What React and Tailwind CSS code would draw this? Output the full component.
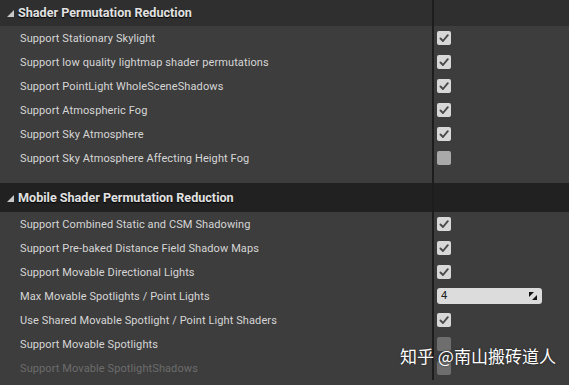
import React from "react";

const Check = () => (
  <div className="w-[14px] h-[14px] rounded-[2px] bg-[#d8d8d8] flex items-center justify-center">
    <svg width="10" height="10" viewBox="0 0 10 10">
      <path d="M1.5 5.5 L4 8 L8.8 2.2" fill="none" stroke="#4a4a4a" strokeWidth="1.9" strokeLinecap="round" strokeLinejoin="round" />
    </svg>
  </div>
);

const Box = ({ dim }) => (
  <div className={`w-[14px] h-[14px] rounded-[2px] ${dim ? "bg-[#6e6e6e]" : "bg-[#a9a9a9]"}`} />
);

const Row = ({ label, children, dim }) => (
  <div className="flex h-[24px]">
    <div className={`w-[432px] pl-[20px] pt-[2px] flex items-center text-[11px] tracking-[0.1px] ${dim ? "text-[#6c6c6c]" : "text-[#d6d6d6]"}`}>
      {label}
    </div>
    <div className="flex-1 border-l-2 border-[#1d1d1d] flex items-center pl-[3px]">{children}</div>
  </div>
);

const Header = ({ title, dark, h }) => (
  <div className={`flex ${h} ${dark ? "bg-[#212121]" : "bg-[#2f2f2f]"}`}>
    <div className={`w-[432px] flex items-center pl-[6px] gap-[3px] ${dark ? "pt-[2px]" : ""}`}>
      <svg width="9" height="9" viewBox="0 0 9 9">
        <path d="M8 1 L8 8 L1 8 Z" fill="#c8c8c8" />
      </svg>
      <span className="text-[12.6px] font-bold text-[#e2e2e2] [text-shadow:0_1px_1px_#000]">{title}</span>
    </div>
    <div className="flex-1 border-l-2 border-[#1d1d1d]" />
  </div>
);

const Spacer = ({ h }) => (
  <div className={`flex ${h}`}>
    <div className="w-[432px]" />
    <div className="flex-1 border-l-2 border-[#1d1d1d]" />
  </div>
);

export default function App() {
  return (
    <div className="relative w-[569px] h-[385px] overflow-hidden bg-[#3d3d3d] font-['Roboto',sans-serif]">
      <Header title="Shader Permutation Reduction" h="h-[26px]" />
      <Row label="Support Stationary Skylight"><Check /></Row>
      <Row label="Support low quality lightmap shader permutations"><Check /></Row>
      <Row label="Support PointLight WholeSceneShadows"><Check /></Row>
      <Row label="Support Atmospheric Fog"><Check /></Row>
      <Row label="Support Sky Atmosphere"><Check /></Row>
      <Row label="Support Sky Atmosphere Affecting Height Fog"><Box /></Row>
      <Spacer h="h-[13px]" />
      <Header title="Mobile Shader Permutation Reduction" dark h="h-[29px]" />
      <Row label="Support Combined Static and CSM Shadowing"><Check /></Row>
      <Row label="Support Pre-baked Distance Field Shadow Maps"><Check /></Row>
      <Row label="Support Movable Directional Lights"><Check /></Row>
      <Row label="Max Movable Spotlights / Point Lights">
        <div className="w-[105px] h-[16px] rounded-[3px] bg-[#dcdcdc] flex items-center justify-between pl-[4px] pr-[5px]">
          <span className="text-[11px] text-[#202020]">4</span>
          <svg width="8" height="8" viewBox="0 0 8 8">
            <path d="M0 0 L5 0 L0 5 Z" fill="#111" />
            <path d="M8 8 L3 8 L8 3 Z" fill="#111" />
          </svg>
        </div>
      </Row>
      <Row label="Use Shared Movable Spotlight / Point Light Shaders"><Check /></Row>
      <Row label="Support Movable Spotlights"><Box dim /></Row>
      <Row label="Support Movable SpotlightShadows" dim><Box dim /></Row>
      <div className="absolute left-[400px] top-[347px] text-[17px] text-white font-['Noto_Sans_CJK_SC',sans-serif] [text-shadow:0_0_2px_rgba(0,0,0,0.6)] leading-none">
        知乎 @南山搬砖道人
      </div>
    </div>
  );
}
